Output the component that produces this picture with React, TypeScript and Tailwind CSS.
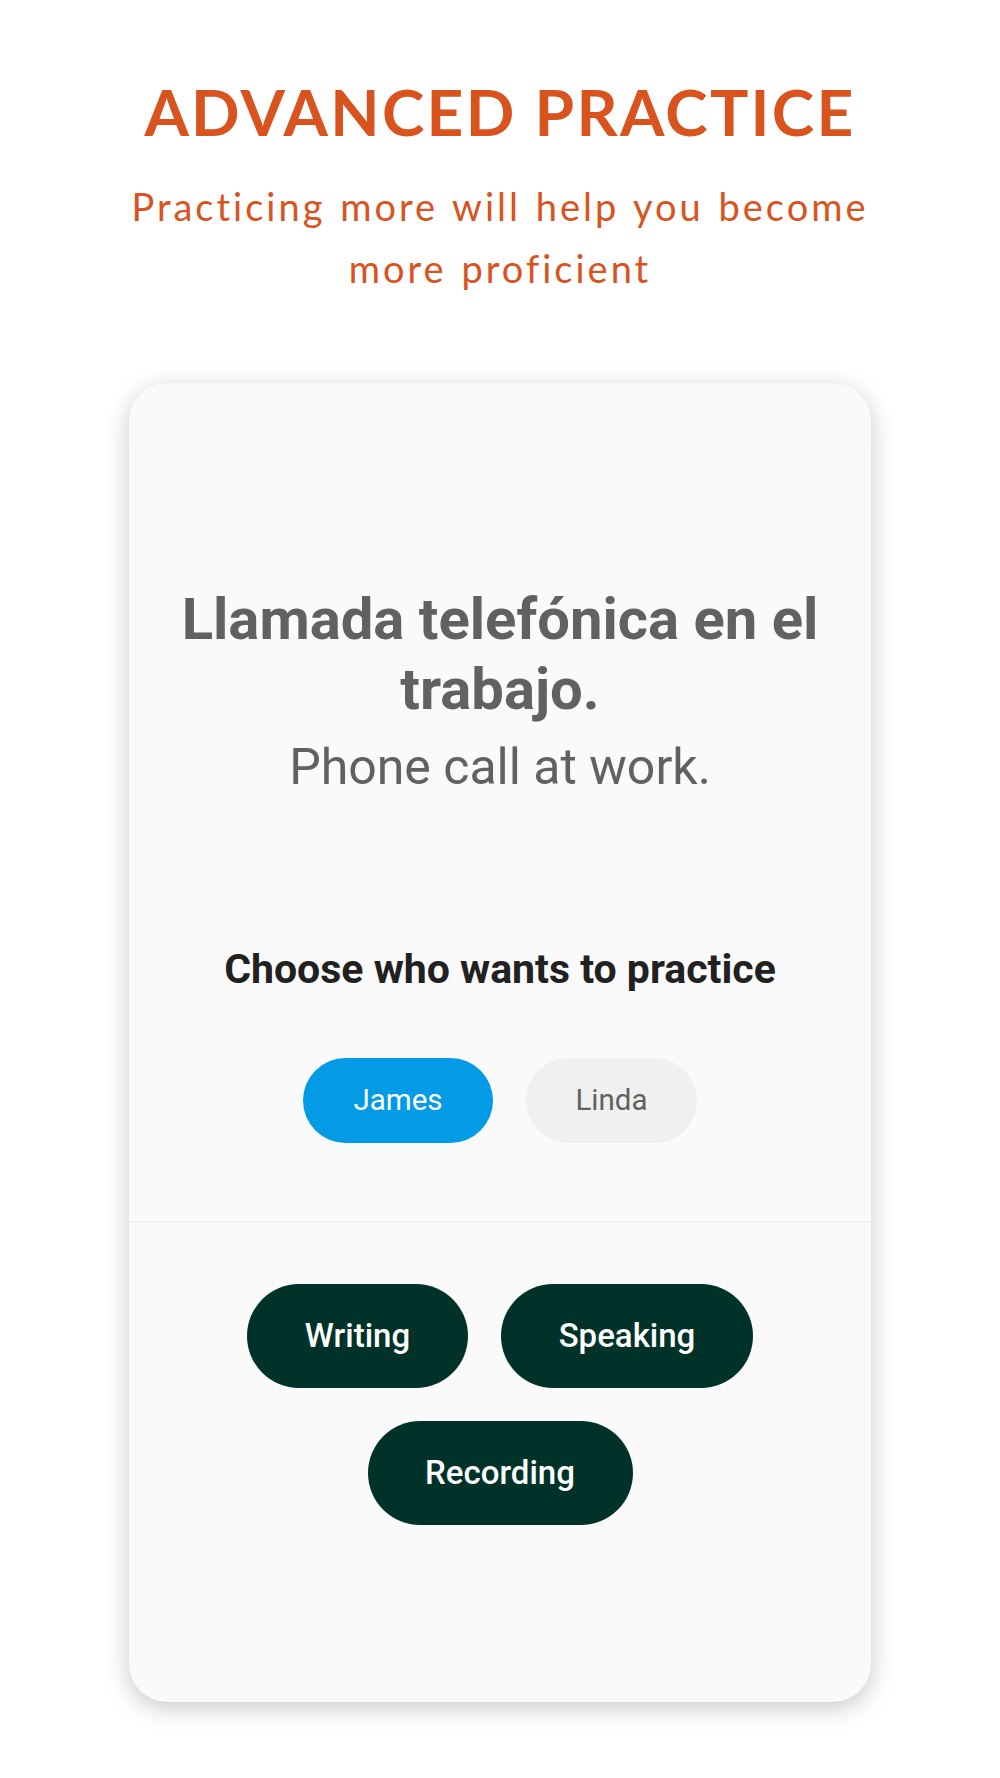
import React from "react";

export default function App() {
  return (
    <div className="min-h-[1778px] w-full bg-white" style={{ fontFamily: "Roboto, 'Noto Sans', sans-serif" }}>
      <div className="flex flex-col items-center pt-[72px]">
        <h1
          className="h-[80px] text-[64px] leading-[80px] font-bold text-[#D9531E] tracking-[2.3px]"
          style={{ fontFamily: "Lato, 'Noto Sans', sans-serif" }}
        >
          ADVANCED PRACTICE
        </h1>
        <p
          className="mt-[23px] w-[900px] text-center text-[38px] leading-[62px] font-normal text-[#D9531E] tracking-[3px] [word-spacing:2px]"
          style={{ fontFamily: "Lato, 'Noto Sans', sans-serif" }}
        >
          Practicing more will help you become
          <br />
          more proficient
        </p>
      </div>

      <div className="mx-auto mt-[84px] w-[742px] rounded-[38px] bg-[#FAFAFA] shadow-[0_6px_24px_rgba(0,0,0,0.22)] overflow-hidden">
        <div className="flex flex-col items-center pt-[201px] pb-[78px] border-b border-[#EBEBEB]">
          <h2 className="text-center text-[58px] leading-[70px] font-bold text-[#616161] whitespace-nowrap">
            Llamada telefónica en el
            <br />
            trabajo.
          </h2>
          <p className="mt-[13px] text-[50px] leading-[60px] text-[#616161]">Phone call at work.</p>
          <p className="mt-[148px] text-[41px] leading-[48px] font-bold text-[#212121]">
            Choose who wants to practice
          </p>
          <div className="mt-[65px] flex gap-[33px]">
            <button className="flex h-[85px] w-[190px] items-center justify-center rounded-full bg-[#039BE5] text-[29.5px] text-white">
              James
            </button>
            <button className="flex h-[85px] w-[171px] items-center justify-center rounded-full bg-[#F0F0F0] text-[29.5px] text-[#616161]">
              Linda
            </button>
          </div>
        </div>
        <div className="flex flex-col items-center gap-[33px] pt-[62px] pb-[177px]">
          <div className="flex gap-[33px]">
            <button className="flex h-[104px] w-[221px] items-center justify-center rounded-full bg-[#003229] text-[33px] font-medium text-white">
              Writing
            </button>
            <button className="flex h-[104px] w-[252px] items-center justify-center rounded-full bg-[#003229] text-[33px] font-medium text-white">
              Speaking
            </button>
          </div>
          <button className="flex h-[104px] w-[265px] items-center justify-center rounded-full bg-[#003229] text-[33px] font-medium text-white">
            Recording
          </button>
        </div>
      </div>
    </div>
  );
}
